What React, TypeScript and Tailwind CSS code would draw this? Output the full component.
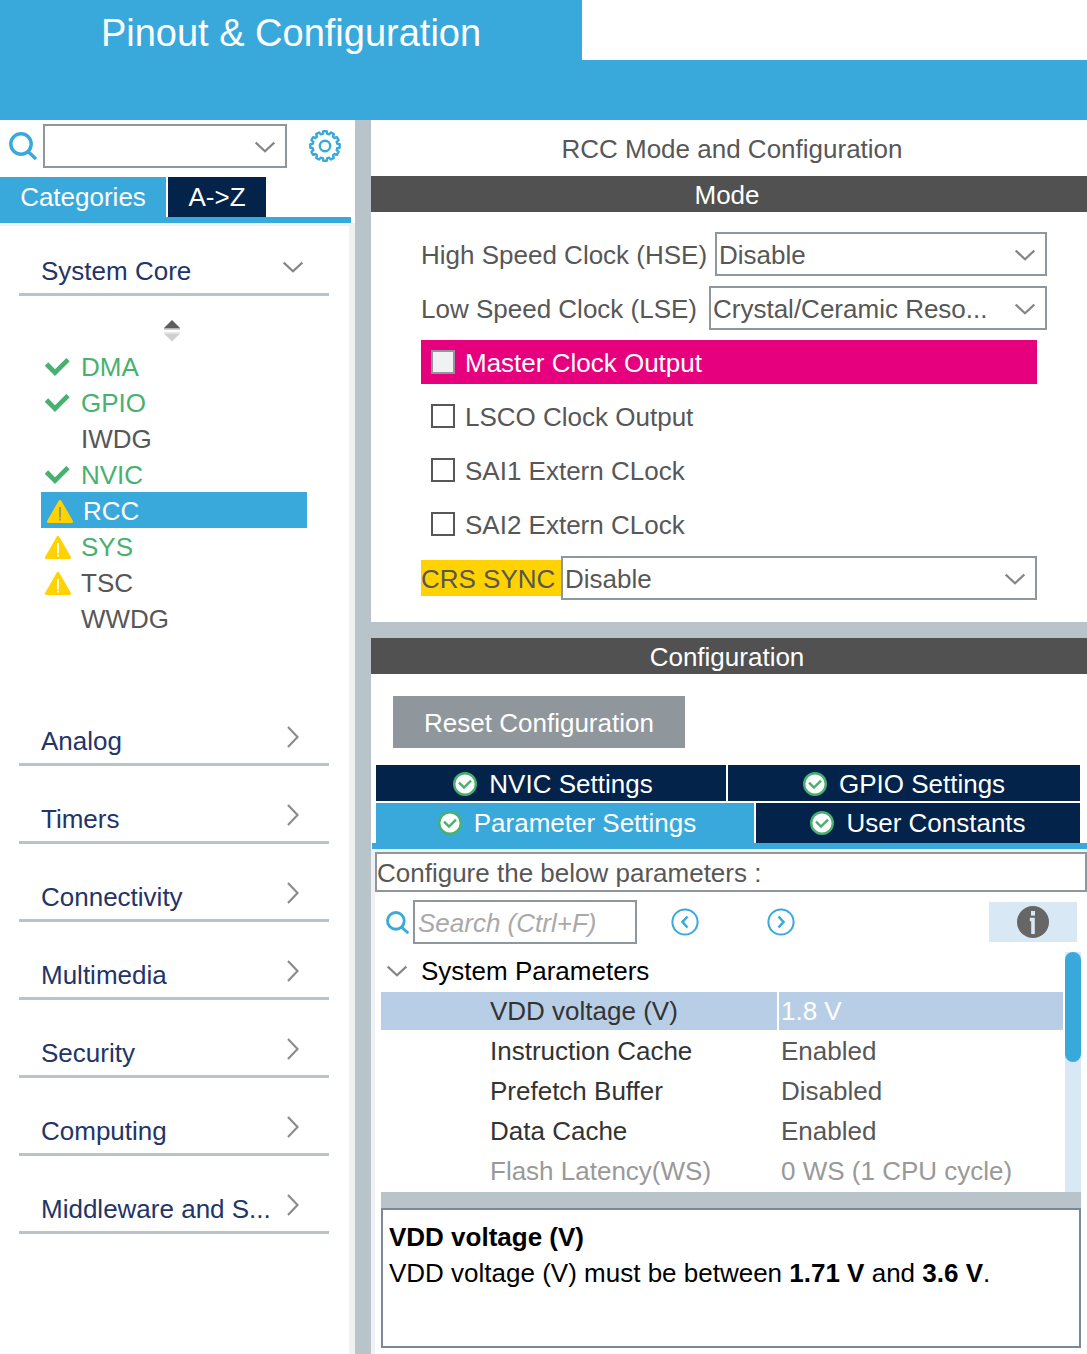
import { useState } from "react";
import type { ReactNode } from "react";

type Status = "ok" | "warn" | "none";

function ChevronDown({ className = "" }: { className?: string }) {
  return (
    <svg viewBox="0 0 20 12" className={`h-3 w-5 shrink-0 fill-none stroke-[#868686] ${className}`} strokeWidth="2.2" aria-hidden="true">
      <path d="M0.7 1.6 L10 10.2 L19.3 1.6" />
    </svg>
  );
}

function ChevronRight() {
  return (
    <svg viewBox="0 0 12 22" className="h-[22px] w-3 shrink-0 fill-none stroke-[#8c8c8c]" strokeWidth="2.2" aria-hidden="true">
      <path d="M1 1 L10.5 11 L1 21" />
    </svg>
  );
}

function SearchIcon({ className }: { className: string }) {
  return (
    <svg viewBox="0 0 28 28" className={`shrink-0 fill-none stroke-[#39a9dc] ${className}`} strokeWidth="3.4" aria-hidden="true">
      <circle cx="12" cy="12" r="10.2" />
      <path d="M19 19.5 L27 27" />
    </svg>
  );
}

const gearPath = (() => {
  const teeth = 12;
  const points: string[] = [];
  for (let i = 0; i < teeth; i++) {
    [
      [-0.34, 12.4],
      [-0.22, 14.8],
      [0.22, 14.8],
      [0.34, 12.4],
    ].forEach(([offset, radius]) => {
      const angle = ((i + offset) / teeth) * Math.PI * 2;
      points.push(`${(16 + radius * Math.sin(angle)).toFixed(2)} ${(16 - radius * Math.cos(angle)).toFixed(2)}`);
    });
  }
  return `M${points.join("L")}Z`;
})();

function GearIcon() {
  return (
    <svg viewBox="0 0 32 32" className="size-8 fill-none stroke-[#39a9dc]" strokeWidth="2.4" strokeLinejoin="round" aria-hidden="true">
      <path d={gearPath} />
      <circle cx="16" cy="16" r="5.2" />
    </svg>
  );
}

function CheckIcon() {
  return (
    <svg viewBox="0 0 26 20" className="h-5 w-[26px] fill-none stroke-[#49b170]" strokeWidth="4.8" aria-hidden="true">
      <path d="M1.5 7 L10 15.6 L23 2.6" />
    </svg>
  );
}

function WarnIcon() {
  return (
    <svg viewBox="0 0 26 23" className="h-[23px] w-[26px]" aria-hidden="true">
      <path d="M13 1.5 L24.5 21.5 H1.5 Z" fill="#ffd200" stroke="#ffd200" strokeWidth="3" strokeLinejoin="round" />
      <path d="M13 7 V17.5 M13 18.6 V20.4" stroke="currentColor" strokeWidth="1.8" />
    </svg>
  );
}

function BadgeCheck() {
  return (
    <svg viewBox="0 0 24 24" className="size-6 shrink-0" fill="none" aria-hidden="true">
      <circle cx="12" cy="12" r="10.8" fill="#fff" stroke="#49b170" strokeWidth="2.4" />
      <path d="M6 10.6 L11 15.6 L18 8.6" stroke="#49b170" strokeWidth="2.4" />
    </svg>
  );
}

function Select({ id, value, className = "" }: { id: string; value: string; className?: string }) {
  return (
    <div className={`relative h-11 min-w-0 flex-1 ${className}`}>
      <select
        id={id}
        aria-label={value ? undefined : "Find a component"}
        className="size-full appearance-none border-2 border-[#8f969c] bg-white pt-0.5 pr-12 pl-[2px] text-[26px] text-[#575757] outline-none"
      >
        <option>{value}</option>
      </select>
      <ChevronDown className="pointer-events-none absolute top-[17px] right-3" />
    </div>
  );
}

const coreItems: { name: string; status: Status; configured?: boolean }[] = [
  { name: "DMA", status: "ok", configured: true },
  { name: "GPIO", status: "ok", configured: true },
  { name: "IWDG", status: "none" },
  { name: "NVIC", status: "ok", configured: true },
  { name: "RCC", status: "warn" },
  { name: "SYS", status: "warn", configured: true },
  { name: "TSC", status: "warn" },
  { name: "WWDG", status: "none" },
];

const categories = ["Analog", "Timers", "Connectivity", "Multimedia", "Security", "Computing", "Middleware and S..."];

function Category({ label, open = false }: { label: string; open?: boolean }) {
  return (
    <button
      className={`flex w-full items-end justify-between border-b-[3px] border-[#b8c3ca] pr-[26px] pb-1 pl-[22px] text-left text-[#233468] ${open ? "h-[70px]" : "h-[78px]"}`}
    >
      <span className="leading-9">{label}</span>
      {open ? (
        <ChevronDown className="mb-4" />
      ) : (
        <span className="mr-1 mb-[11px]">
          <ChevronRight />
        </span>
      )}
    </button>
  );
}

function Sidebar() {
  const [selected, setSelected] = useState("RCC");
  return (
    <aside className="flex w-[355px] shrink-0 flex-col">
      <div className="flex h-[57px] items-center pt-px pr-3.5 pb-1.5 pl-[9px]">
        <SearchIcon className="size-7" />
        <Select id="component-search" value="" className="ml-1.5" />
        <button aria-label="Settings" className="ml-[22px]">
          <GearIcon />
        </button>
      </div>
      <div className="flex h-10 gap-0.5 text-white">
        <button className="w-[166px] bg-[#39a9dc]">Categories</button>
        <button className="w-[98px] bg-[#03234b]">A-&gt;Z</button>
      </div>
      <div className="mr-1 h-1.5 bg-[#39a9dc]" />
      <div className="flex-1 border-t-[3px] border-r-[6px] border-[#f0f1f1] pr-5 pl-[19px]">
        <Category label="System Core" open />
        <div className="flex h-[52px] justify-center pt-6 pr-1">
          <svg viewBox="0 0 18 22" className="h-[22px] w-[18px]" aria-hidden="true">
            <path d="M9 0 L17 8 H1 Z" fill="#5e5e5e" />
            <path d="M1 8 H17 V9.6 H1 Z" fill="#b4b4b4" />
            <path d="M1 12 H17 V13.6 H1 Z" fill="#e8e8e8" />
            <path d="M1 13.6 H17 L9 21.6 Z" fill="#cfcfcf" />
          </svg>
        </div>
        <ul className="mr-[22px] ml-[22px]">
          {coreItems.map(({ name, status, configured }) => {
            const active = name === selected;
            const tone = active ? "bg-[#39a9dc] pl-1.5 text-white" : configured ? "pl-1 text-[#49b170]" : "pl-1 text-[#575757]";
            return (
              <li key={name}>
                <button onClick={() => setSelected(name)} className={`flex h-9 w-full items-center pt-0.5 text-left ${tone}`}>
                  <span className={`w-9 ${active ? "text-[#8a9a60]" : "text-white"}`}>
                    {status === "ok" && <CheckIcon />}
                    {status === "warn" && <WarnIcon />}
                  </span>
                  <span>{name}</span>
                </button>
              </li>
            );
          })}
        </ul>
        <div className="mt-[52px]">
          {categories.map((label) => (
            <Category key={label} label={label} />
          ))}
        </div>
      </div>
    </aside>
  );
}

function CheckRow({ label, highlighted = false }: { label: string; highlighted?: boolean }) {
  return (
    <label className={`mr-2.5 flex h-11 items-center gap-2.5 pl-2.5 ${highlighted ? "bg-[#e6007e] text-white" : ""}`}>
      <input
        type="checkbox"
        disabled={highlighted}
        className={`size-6 appearance-none border-2 ${highlighted ? "border-[#8f969c] bg-[#f0f1f3]" : "border-[#575757] bg-white checked:bg-[#39a9dc]"}`}
      />
      <span className="pt-0.5">{label}</span>
    </label>
  );
}

function SectionBar({ children }: { children: ReactNode }) {
  return <h2 className="h-9 bg-[#505150] pr-1 text-center leading-[38px] text-white">{children}</h2>;
}

function ModePanel() {
  return (
    <section>
      <h1 className="h-14 pl-1.5 text-center leading-[58px]">RCC Mode and Configuration</h1>
      <SectionBar>Mode</SectionBar>
      <div className="flex flex-col gap-2.5 pt-5 pr-10 pb-[22px] pl-[50px]">
        <div className="flex items-center">
          <label htmlFor="hse" className="w-[294px] pt-0.5 whitespace-nowrap">High Speed Clock (HSE)</label>
          <Select id="hse" value="Disable" />
        </div>
        <div className="flex items-center">
          <label htmlFor="lse" className="w-72 pt-0.5 whitespace-nowrap">Low Speed Clock (LSE)</label>
          <Select id="lse" value="Crystal/Ceramic Reso..." />
        </div>
        <CheckRow label="Master Clock Output" highlighted />
        <CheckRow label="LSCO Clock Output" />
        <CheckRow label="SAI1 Extern CLock" />
        <CheckRow label="SAI2 Extern CLock" />
        <div className="mr-2.5 flex items-center">
          <label htmlFor="crs" className="h-9 w-[140px] bg-[#ffd200] leading-[38px] whitespace-nowrap">CRS SYNC</label>
          <Select id="crs" value="Disable" />
        </div>
      </div>
    </section>
  );
}

function SettingsTab({ label, className }: { label: string; className: string }) {
  return (
    <button className={`flex min-w-0 items-center justify-center ${className}`}>
      <BadgeCheck />
      <span className="ml-3">{label}</span>
    </button>
  );
}

function StepButton({ label, d }: { label: string; d: string }) {
  return (
    <button aria-label={label}>
      <svg viewBox="0 0 28 28" className="size-7 fill-none stroke-[#39a9dc]" strokeWidth="2" aria-hidden="true">
        <circle cx="14" cy="14" r="12.6" />
        <path d={d} strokeWidth="2.6" />
      </svg>
    </button>
  );
}

const parameters = [
  { name: "VDD voltage (V)", value: "1.8 V", nameTone: "bg-[#b8cee6] text-[#333333]", valueTone: "bg-[#b8cee6] text-white" },
  { name: "Instruction Cache", value: "Enabled", nameTone: "text-[#333333]", valueTone: "text-[#575757]" },
  { name: "Prefetch Buffer", value: "Disabled", nameTone: "text-[#333333]", valueTone: "text-[#575757]" },
  { name: "Data Cache", value: "Enabled", nameTone: "text-[#333333]", valueTone: "text-[#575757]" },
  { name: "Flash Latency(WS)", value: "0 WS (1 CPU cycle)", nameTone: "text-[#999999]", valueTone: "text-[#999999]" },
];

function ConfigurationPanel() {
  return (
    <section className="flex flex-1 flex-col">
      <SectionBar>Configuration</SectionBar>
      <div className="pt-[22px] pb-[17px] pl-[22px]">
        <button className="h-[52px] w-[292px] bg-[#8f969c] pt-0.5 text-white">Reset Configuration</button>
      </div>
      <div className="flex flex-col gap-0.5 pr-[7px] pl-[5px] text-white">
        <div className="grid h-9 grid-cols-[350fr_352fr] gap-0.5">
          <SettingsTab label="NVIC Settings" className="bg-[#03234b] pt-0.5 pl-1" />
          <SettingsTab label="GPIO Settings" className="bg-[#03234b] pt-0.5" />
        </div>
        <div className="grid h-10 grid-cols-[378fr_324fr] gap-0.5">
          <SettingsTab label="Parameter Settings" className="bg-[#39a9dc] pl-1" />
          <SettingsTab label="User Constants" className="bg-[#03234b]" />
        </div>
      </div>
      <div className="ml-px h-1.5 bg-[#39a9dc]" />
      <div className="flex-1 border-t-[3px] border-l-4 border-[#f0f1f4]">
        <p className="h-10 border-2 border-[#8f969c] leading-[38px]">Configure the below parameters :</p>
        <div className="flex h-[60px] items-center pr-2.5 pl-[11px]">
          <label htmlFor="param-search" className="mr-1">
            <SearchIcon className="size-[23px]" />
          </label>
          <input
            id="param-search"
            aria-label="Search parameters"
            placeholder="Search (Ctrl+F)"
            className="h-11 w-56 border-2 border-[#8f969c] px-[3px] pt-0.5 italic outline-none placeholder:text-[#a9a9a9]"
          />
          <div className="ml-[34px] flex gap-[68px]">
            <StepButton label="Previous match" d="M16.5 8.5 L11.5 14 L16.5 19.5" />
            <StepButton label="Next match" d="M11.5 8.5 L16.5 14 L11.5 19.5" />
          </div>
          <button aria-label="Information" className="ml-auto flex h-10 w-[88px] items-center justify-center bg-[#d9e8f5]">
            <svg viewBox="0 0 32 32" className="size-8" aria-hidden="true">
              <circle cx="16" cy="16" r="16" fill="#666" />
              <path d="M16 5 V9.6" stroke="#d9e8f5" strokeWidth="4" />
              <path d="M12.8 13.5 H16 V28" stroke="#d9e8f5" strokeWidth="3.6" fill="none" />
            </svg>
          </button>
        </div>
        <div className="mr-1.5 ml-1.5 flex h-60 gap-0.5">
          <div className="min-w-0 flex-1 overflow-hidden">
            <button className="flex h-[38px] items-center pl-1.5 text-black">
              <ChevronDown />
              <span className="ml-3.5">System Parameters</span>
            </button>
            <table className="-mx-0.5 w-[calc(100%+4px)] table-fixed border-separate border-spacing-[2px]">
              <colgroup>
                <col className="w-[396px]" />
                <col />
              </colgroup>
              <tbody>
                {parameters.map(({ name, value, nameTone, valueTone }) => (
                  <tr key={name} className="h-[38px]">
                    <th scope="row" className={`p-0 pl-[109px] text-left font-normal whitespace-nowrap ${nameTone}`}>{name}</th>
                    <td className={`p-0 pl-0.5 whitespace-nowrap ${valueTone}`}>{value}</td>
                  </tr>
                ))}
              </tbody>
            </table>
          </div>
          <div className="w-4 bg-[#d9e8f5]">
            <div className="h-[110px] rounded-full bg-[#39a9dc]" />
          </div>
        </div>
        <div className="mr-1.5 ml-1.5 h-4 bg-[#b8c3ca]" />
        <div className="mr-1.5 mb-1.5 ml-1.5 h-[140px] border-2 border-[#7b8896] px-1.5 pt-[9px] leading-9 text-black">
          <p className="font-bold">VDD voltage (V)</p>
          <p>
            VDD voltage (V) must be between <b>1.71 V</b> and <b>3.6 V</b>.
          </p>
        </div>
      </div>
    </section>
  );
}

export default function App() {
  return (
    <div className="flex min-h-screen flex-col bg-white font-['Liberation_Sans',Arial,sans-serif] text-[26px] leading-[30px] text-[#575757]">
      <header className="border-b-[60px] border-[#39a9dc]">
        <div className="flex h-[60px] w-[582px] items-center justify-center bg-[#39a9dc] text-[38px] leading-[60px] text-white">
          <span className="pt-1.5">Pinout &amp; Configuration</span>
        </div>
      </header>
      <div className="flex flex-1">
        <Sidebar />
        <div className="w-4 shrink-0 bg-[#b8c3ca]" />
        <main className="flex min-w-0 flex-1 flex-col">
          <ModePanel />
          <div className="h-4 bg-[#b8c3ca]" />
          <ConfigurationPanel />
        </main>
      </div>
    </div>
  );
}
